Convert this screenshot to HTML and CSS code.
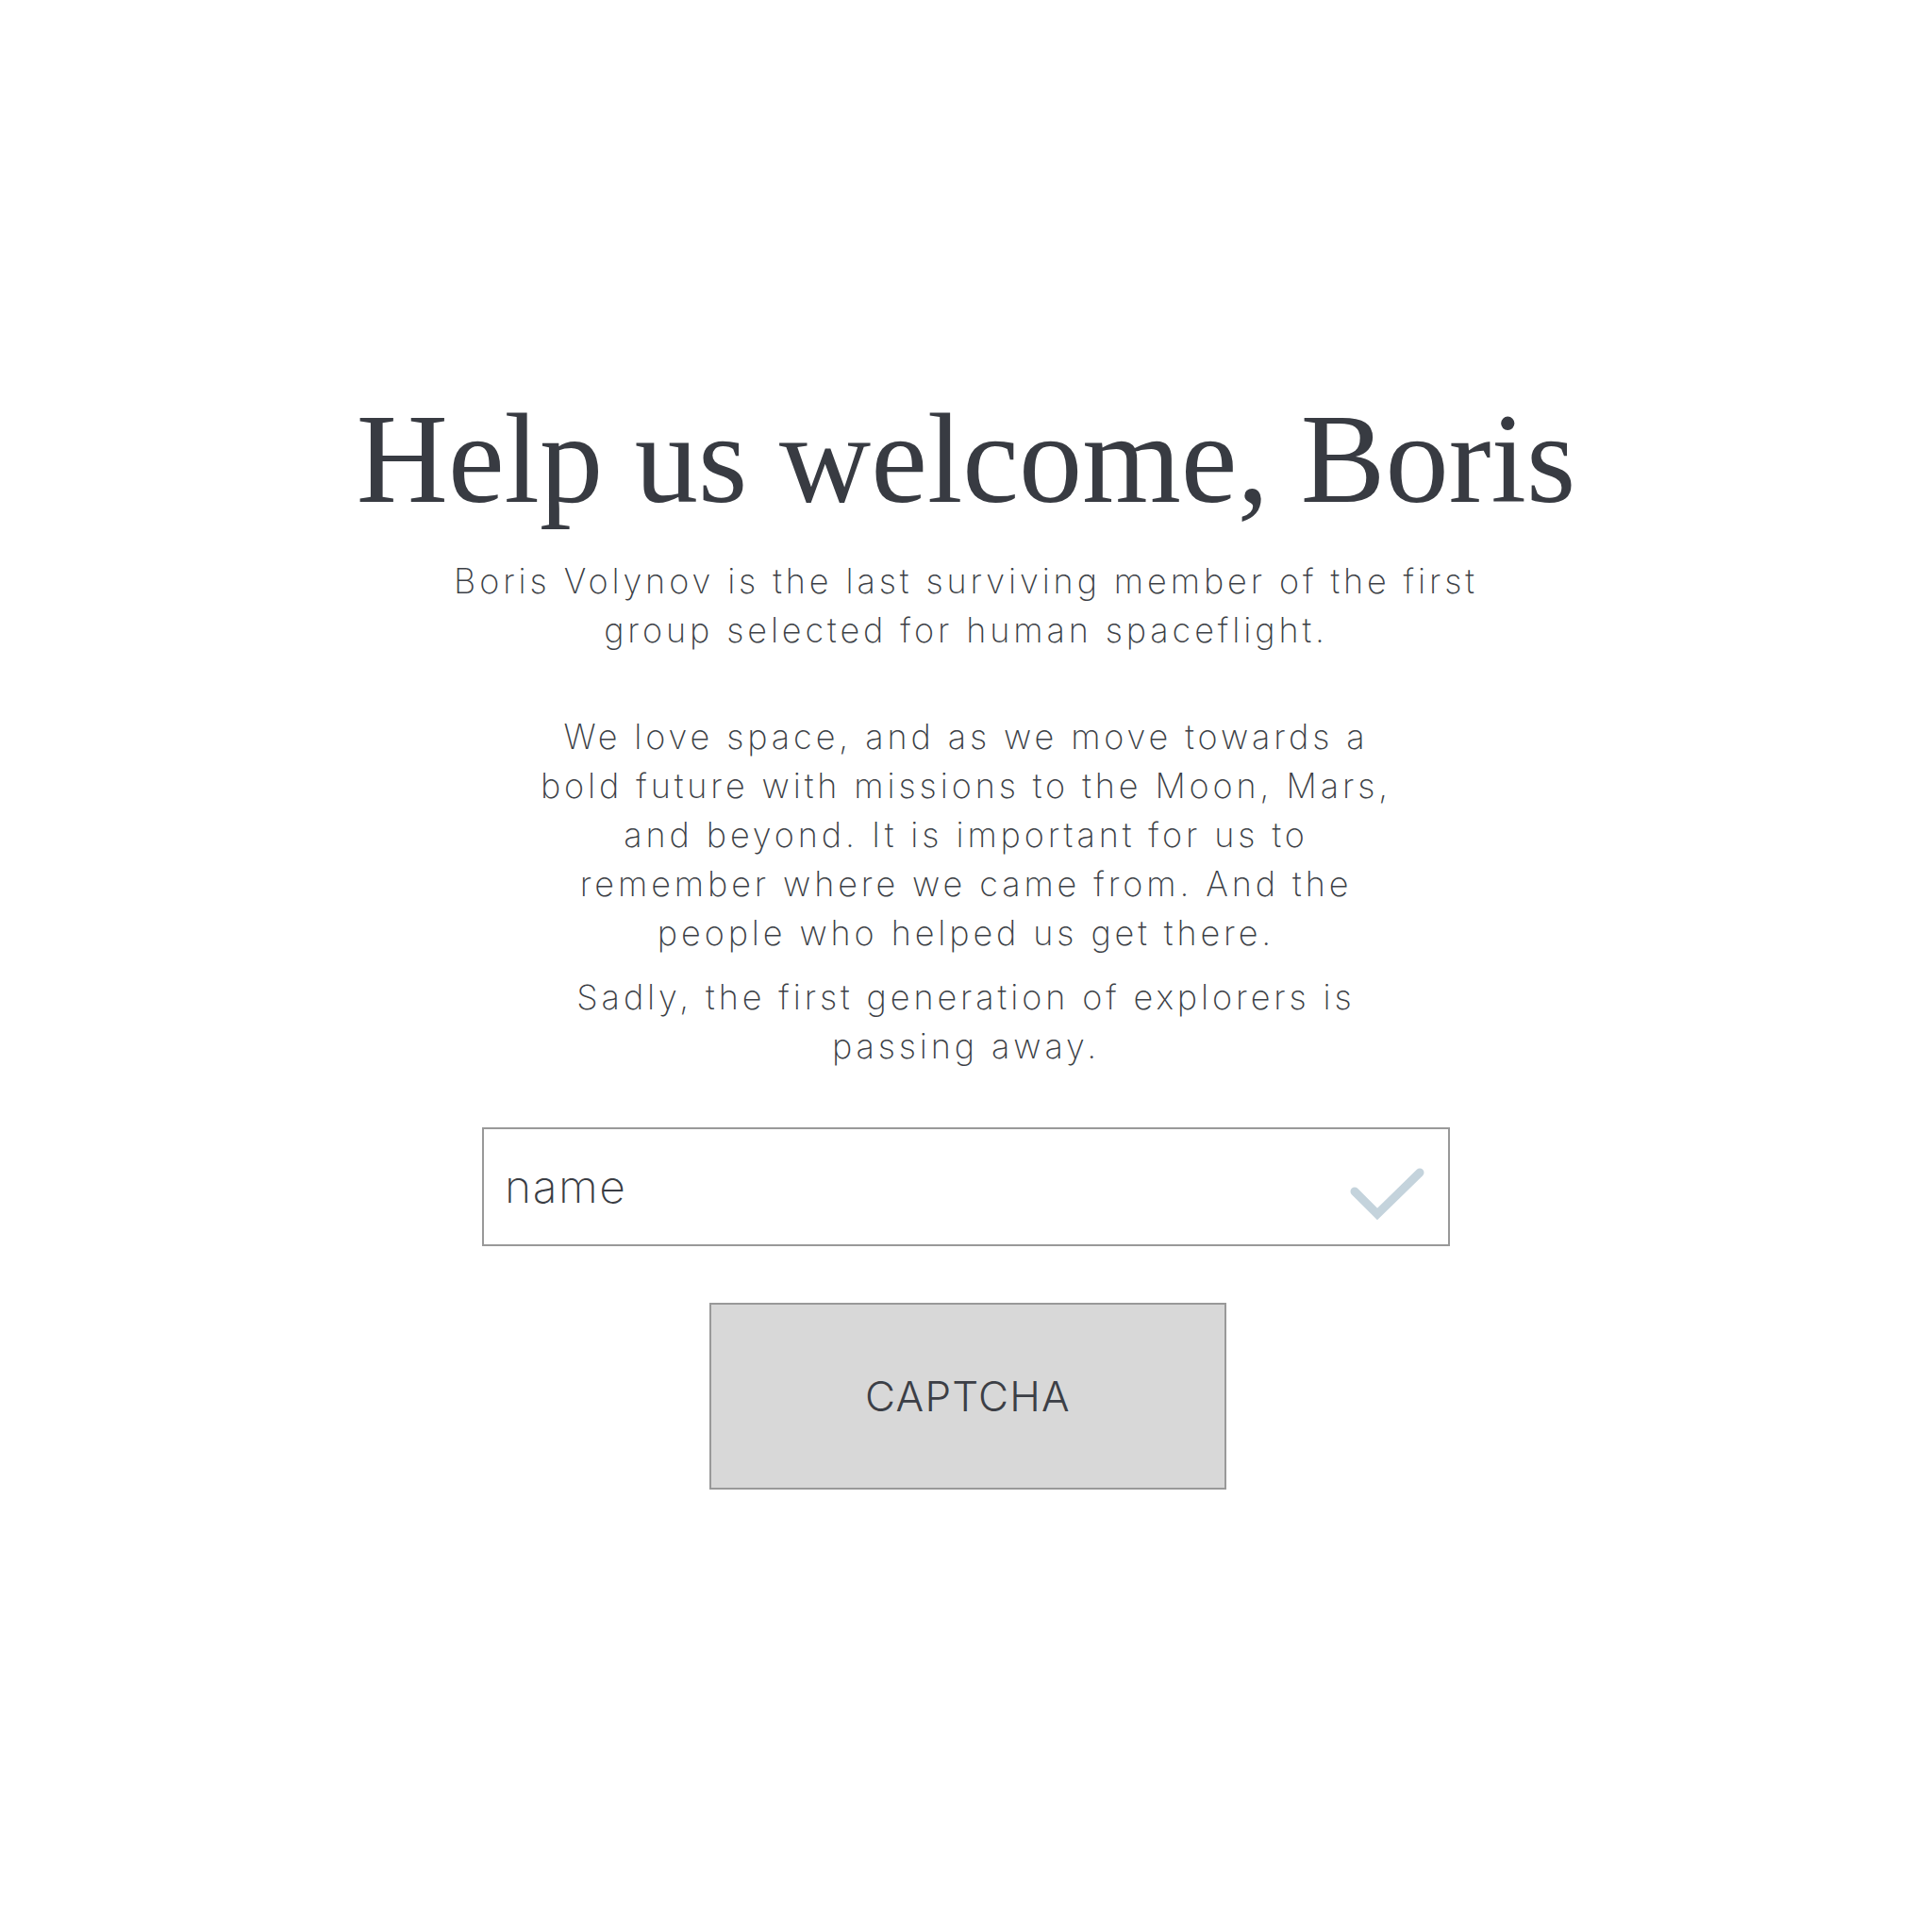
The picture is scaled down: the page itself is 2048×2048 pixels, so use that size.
FILE: index.html
```html
<!DOCTYPE html>
<html lang="en">
<head>
<meta charset="utf-8">
<title>Help us welcome, Boris</title>
<link rel="stylesheet" href="styles.css">
</head>
<body>
<main class="page">
  <h1 class="title">Help us welcome, Boris</h1>
  <p class="lead">Boris Volynov is the last surviving member of the first<br>group selected for human spaceflight.</p>
  <p class="copy">We love space, and as we move towards a<br>bold future with missions to the Moon, Mars,<br>and beyond. It is important for us to<br>remember where we came from. And the<br>people who helped us get there.</p>
  <p class="copy copy-last">Sadly, the first generation of explorers is<br>passing away.</p>
  <div class="field">
    <span class="field-text">name</span>
    <svg class="field-check" width="80" height="60" viewBox="0 0 80 60" aria-hidden="true">
      <polyline points="5,28 29,52 74,8" fill="none" stroke="#c4d3dc" stroke-width="9" stroke-linecap="round" stroke-linejoin="miter"/>
    </svg>
  </div>
  <button class="captcha" type="button">CAPTCHA</button>
</main>
</body>
</html>
```
FILE: styles.css
```css
html, body {
  margin: 0;
  padding: 0;
  background: #ffffff;
}

.page {
  display: flex;
  flex-direction: column;
  align-items: center;
  padding-top: 406px;
  font-family: Inter, "Noto Sans", sans-serif;
  font-weight: 250;
  color: #3c3f46;
}

.title {
  margin: 0;
  font-family: "Liberation Serif", "DejaVu Serif", serif;
  font-weight: 400;
  font-size: 134.5px;
  line-height: 1.2;
  color: #383b42;
  white-space: nowrap;
}

.lead,
.copy {
  margin: 0;
  font-size: 36px;
  line-height: 52px;
  letter-spacing: 3.9px;
  text-align: center;
  white-space: nowrap;
}

.lead {
  margin-top: 23px;
}

.copy {
  margin-top: 61px;
}

.copy-last {
  margin-top: 16px;
}

.field {
  box-sizing: border-box;
  width: 1026px;
  height: 126px;
  margin-top: 60px;
  border: 2px solid #999999;
  padding: 0 24px 0 22px;
  display: flex;
  align-items: center;
  justify-content: space-between;
}

.field-text {
  font-size: 48px;
  line-height: 1;
  letter-spacing: 1.5px;
  color: #3a3d44;
}

.field-check {
  display: block;
  margin-top: 14px;
}

.captcha {
  box-sizing: border-box;
  width: 548px;
  height: 198px;
  margin-top: 60px;
  margin-left: 4px;
  border: 2px solid #999999;
  background: #d8d8d8;
  font-family: Inter, "Noto Sans", sans-serif;
  font-weight: 300;
  font-size: 44px;
  letter-spacing: 1.2px;
  color: #3c3f46;
  padding: 0;
}
```
